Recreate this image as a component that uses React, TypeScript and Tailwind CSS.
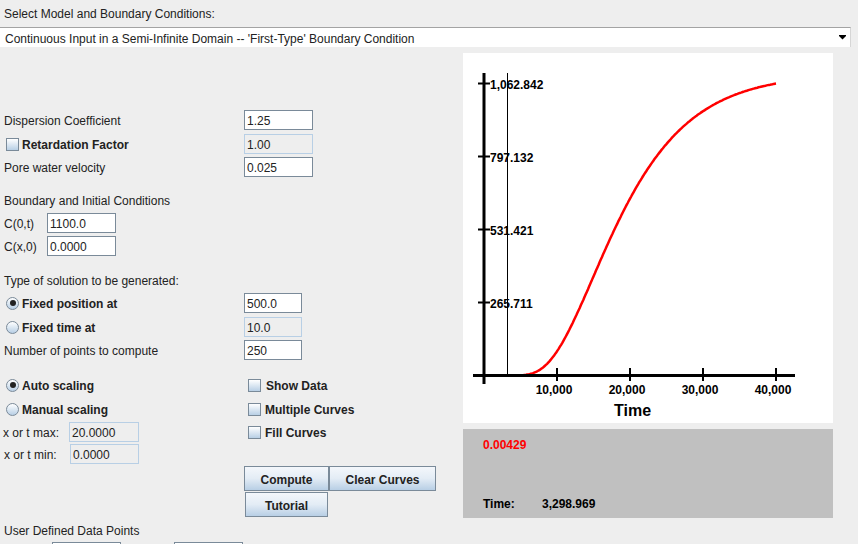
import React from 'react';

// Ogata-Banks breakthrough curve, drawn in the plot
function erfc(x: number) {
    const z = Math.abs(x);
    const t = 1 / (1 + 0.5 * z);
    const r = t * Math.exp(-z * z - 1.26551223 + t * (1.00002368 + t * (0.37409196 + t * (0.09678418 + t * (-0.18628806 + t * (0.27886807 + t * (-1.13520398 + t * (1.48851587 + t * (-0.82215223 + t * 0.17087277)))))))));
    return x >= 0 ? r : 2 - r;
}

function conc(t: number) {
    const L = 500, v = 0.025, D = 1.25, C0 = 1100;
    if (t <= 0) return 0;
    const s = 2 * Math.sqrt(D * t);
    return (C0 / 2) * (erfc((L - v * t) / s) + Math.exp((v * L) / D) * erfc((L + v * t) / s));
}

const curve = (() => {
    const pts: string[] = [];
    for (let i = 0; i <= 250; i++) {
        const t = i * 160;
        const x = 21 + (t * 73) / 10000;
        const y = 322.5 - (conc(t) * 73) / 265.711;
        pts.push(`${x.toFixed(1)},${y.toFixed(1)}`);
    }
    return pts.join(' ');
})();

function Field({ value, className, disabled }: { value: string; className: string; disabled?: boolean }) {
    return (
        <div
            className={`h-[20px] flex items-center px-[2px] pt-[2px] border text-[12px] text-[#222] ${disabled ? 'bg-[#eeeeee] border-[#b8cfe5]' : 'bg-white border-[#7a8a99]'} ${className}`}
        >
            {value}
        </div>
    );
}

function Check() {
    return <div className="w-[13px] h-[13px] border border-[#7a8a99] bg-linear-to-b from-white to-[#b8cfe5]" />;
}

function Radio({ on }: { on?: boolean }) {
    return (
        <div className="w-[13px] h-[13px] rounded-full border border-[#7a8a99] bg-linear-to-b from-white to-[#b8cfe5] flex items-center justify-center">
            {on && <div className="w-[6px] h-[6px] rounded-full bg-[#222]" />}
        </div>
    );
}

function Btn({ label, className }: { label: string; className: string }) {
    return (
        <div
            className={`h-[25px] flex items-center justify-center pt-[2px] border border-[#7a8a99] bg-linear-to-b from-[#f4f7fb] via-[#e3ecf5] to-[#b8cfe5] font-bold text-[#222] ${className}`}
        >
            {label}
        </div>
    );
}

export default function App() {
    const yTicks = [
        { y: 249.5, label: '265.711' },
        { y: 176.5, label: '531.421' },
        { y: 103.5, label: '797.132' },
        { y: 30.5, label: '1,062.842' },
    ];
    const xTicks = [
        { x: 94, label: '10,000' },
        { x: 167, label: '20,000' },
        { x: 240, label: '30,000' },
        { x: 313, label: '40,000' },
    ];

    return (
        <div className="w-[858px] h-[544px] overflow-hidden bg-[#eeeeee] text-[12px] leading-[16px] text-[#222] font-['Liberation_Sans',Arial,sans-serif]">
            <div className="pt-[6px] pl-[4px]">Select Model and Boundary Conditions:</div>

            <div className="mt-[5px] w-[851px] h-[20px] flex items-center justify-between bg-white border-t border-t-[#a3a3a3] border-r border-r-[#d6d6d6] pl-[5px] pr-[4px]">
                <span className="pt-[2px]">Continuous Input in a Semi-Infinite Domain -- 'First-Type' Boundary Condition</span>
                <svg width="7" height="5" viewBox="0 0 7 5">
                    <rect x="0" y="0" width="7" height="1" fill="#000" />
                    <polygon points="0,1 7,1 3.5,4.5" fill="#000" />
                </svg>
            </div>

            <div className="flex">
                {/* left form */}
                <div className="w-[463px] flex flex-col">
                    <div className="mt-[63px] flex h-[20px] items-center">
                        <span className="w-[244px] pl-[4px] pt-[2px]">Dispersion Coefficient</span>
                        <Field value="1.25" className="w-[69px]" />
                    </div>
                    <div className="mt-[4px] flex h-[20px] items-center">
                        <div className="w-[244px] pl-[6px] flex items-center gap-[3px]">
                            <Check />
                            <b className="pt-[2px]">Retardation Factor</b>
                        </div>
                        <Field value="1.00" className="w-[69px]" disabled />
                    </div>
                    <div className="mt-[3px] flex h-[20px] items-center">
                        <span className="w-[244px] pl-[4px] pt-[2px]">Pore water velocity</span>
                        <Field value="0.025" className="w-[69px]" />
                    </div>

                    <div className="mt-[16px] pl-[4px]">Boundary and Initial Conditions</div>
                    <div className="mt-[4px] flex h-[20px] items-center">
                        <span className="w-[47px] pl-[4px] pt-[2px]">C(0,t)</span>
                        <Field value="1100.0" className="w-[69px]" />
                    </div>
                    <div className="mt-[3px] flex h-[20px] items-center">
                        <span className="w-[47px] pl-[4px] pt-[2px]">C(x,0)</span>
                        <Field value="0.0000" className="w-[69px]" />
                    </div>

                    <div className="mt-[17px] pl-[4px]">Type of solution to be generated:</div>
                    <div className="mt-[4px] flex h-[20px] items-center">
                        <div className="w-[244px] pl-[6px] flex items-center gap-[3px]">
                            <Radio on />
                            <b className="pt-[2px]">Fixed position at</b>
                        </div>
                        <Field value="500.0" className="w-[58px]" />
                    </div>
                    <div className="mt-[4px] flex h-[20px] items-center">
                        <div className="w-[244px] pl-[6px] flex items-center gap-[3px]">
                            <Radio />
                            <b className="pt-[2px]">Fixed time at</b>
                        </div>
                        <Field value="10.0" className="w-[58px]" disabled />
                    </div>
                    <div className="mt-[3px] flex h-[20px] items-center">
                        <span className="w-[244px] pl-[4px] pt-[2px]">Number of points to compute</span>
                        <Field value="250" className="w-[58px]" />
                    </div>

                    <div className="mt-[15px] flex h-[20px] items-center">
                        <div className="w-[248px] pl-[6px] flex items-center gap-[3px]">
                            <Radio on />
                            <b className="pt-[2px]">Auto scaling</b>
                        </div>
                        <Check />
                        <b className="ml-[5px] pt-[2px]">Show Data</b>
                    </div>
                    <div className="mt-[4px] flex h-[20px] items-center">
                        <div className="w-[248px] pl-[6px] flex items-center gap-[3px]">
                            <Radio />
                            <b className="pt-[2px]">Manual scaling</b>
                        </div>
                        <Check />
                        <b className="ml-[4px] pt-[2px]">Multiple Curves</b>
                    </div>
                    <div className="mt-[3px] flex h-[20px] items-center">
                        <span className="w-[69px] pl-[3px] pt-[2px]">x or t max:</span>
                        <Field value="20.0000" className="w-[70px]" disabled />
                        <div className="ml-[109px] flex items-center">
                            <Check />
                            <b className="ml-[4px] pt-[2px]">Fill Curves</b>
                        </div>
                    </div>
                    <div className="mt-[2px] flex h-[20px] items-center">
                        <span className="w-[70px] pl-[4px] pt-[2px]">x or t min:</span>
                        <Field value="0.0000" className="w-[69px]" disabled />
                    </div>

                    <div className="mt-[2px] flex pl-[244px]">
                        <Btn label="Compute" className="w-[85px]" />
                        <Btn label="Clear Curves" className="w-[107px]" />
                    </div>
                    <div className="mt-[1px] flex pl-[245px]">
                        <Btn label="Tutorial" className="w-[83px]" />
                    </div>

                    <div className="mt-[6px] pl-[4px]">User Defined Data Points</div>
                    <div className="mt-[3px] flex">
                        <Field value="" className="ml-[52px] w-[69px]" />
                        <Field value="" className="ml-[53px] w-[69px]" />
                    </div>
                </div>

                {/* plot + readout */}
                <div className="pt-[6px] flex flex-col">
                    <div className="w-[370px] h-[370px] bg-white">
                        <svg width="370" height="370" viewBox="0 0 370 370">
                            <polyline points={curve} fill="none" stroke="#ff0000" strokeWidth="2.5" />
                            <line x1="21" y1="20" x2="21" y2="331" stroke="#000" strokeWidth="3" />
                            <line x1="10" y1="322.5" x2="332" y2="322.5" stroke="#000" strokeWidth="3" />
                            <line x1="44.5" y1="20" x2="44.5" y2="322" stroke="#000" strokeWidth="1" />
                            {yTicks.map((t) => (
                                <g key={t.label}>
                                    <line x1="15" y1={t.y} x2="27" y2={t.y} stroke="#000" strokeWidth="2" />
                                    <text x="27" y={t.y + 5} fontSize="12" fontWeight="bold" fill="#000" fontFamily="Liberation Sans, Arial, sans-serif">
                                        {t.label}
                                    </text>
                                </g>
                            ))}
                            {xTicks.map((t) => (
                                <g key={t.label}>
                                    <line x1={t.x} y1="315" x2={t.x} y2="328" stroke="#000" strokeWidth="2" />
                                    <text x={t.x - 3} y="341" textAnchor="middle" fontSize="12" fontWeight="bold" fill="#000" fontFamily="Liberation Sans, Arial, sans-serif">
                                        {t.label}
                                    </text>
                                </g>
                            ))}
                            <text x="169.5" y="362.5" textAnchor="middle" fontSize="16" fontWeight="bold" fill="#000" fontFamily="Liberation Sans, Arial, sans-serif">
                                Time
                            </text>
                        </svg>
                    </div>

                    <div className="mt-[6px] w-[370px] h-[89px] bg-[#c0c0c0] pl-[20px] pt-[8px] font-bold text-black">
                        <div className="text-[#ff0000]">0.00429</div>
                        <div className="mt-[43px] flex">
                            <span className="w-[59px]">Time:</span>
                            <span>3,298.969</span>
                        </div>
                    </div>
                </div>
            </div>
        </div>
    );
}
